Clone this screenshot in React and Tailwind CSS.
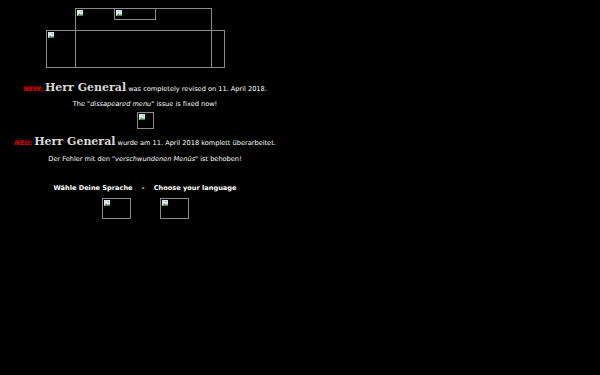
import React from "react";

function Broken({ className }) {
  return (
    <div className={"border border-[#8a8a8a] " + className}>
      <svg width="7" height="7" viewBox="0 0 7 7" className="block ml-[1px] mt-[1px]">
        <rect x="0" y="0" width="6" height="6" fill="#dfe6ea" />
        <path d="M0 6 L2.5 3.5 L4 5 L5 4 L6 5 L6 6 Z" fill="#3f8f3f" />
        <rect x="3.5" y="0.8" width="1.5" height="1.5" fill="#9fb7d0" />
      </svg>
    </div>
  );
}

export default function App() {
  return (
    <div className="w-[600px] h-[375px] bg-black overflow-hidden" style={{ fontFamily: '"DejaVu Sans", Verdana, sans-serif' }}>
      <div className="relative h-[70px] w-[290px]">
        <Broken className="absolute left-[46px] top-[30px] w-[179px] h-[38px]" />
        <Broken className="absolute left-[75px] top-[8px] w-[137px] h-[60px]" />
        <Broken className="absolute left-[114px] top-[8px] w-[42px] h-[12px]" />
      </div>
      <div className="w-[290px] flex flex-col items-center text-white text-[6.6px]">
        <div className="mt-[10px] flex items-baseline gap-[2px] whitespace-nowrap">
          <span className="text-[#e00000] font-bold italic text-[6.6px]">NEW:</span>
          <span className="text-[#d8d8d8] font-bold text-[11px]" style={{ fontFamily: '"DejaVu Serif", Georgia, serif' }}>Herr General</span>
          <span>was completely revised on 11. April 2018.</span>
        </div>
        <div className="mt-[3px] whitespace-nowrap">The "<i>dissapeared menu</i>" issue is fixed now!</div>
        <Broken className="mt-[3px] w-[17px] h-[17px]" />
        <div className="mt-[5px] flex items-baseline gap-[2px] whitespace-nowrap">
          <span className="text-[#e00000] font-bold italic text-[6.6px]">NEU:</span>
          <span className="text-[#d8d8d8] font-bold text-[11px]" style={{ fontFamily: '"DejaVu Serif", Georgia, serif' }}>Herr General</span>
          <span>wurde am 11. April 2018 komplett überarbeitet.</span>
        </div>
        <div className="mt-[4px] whitespace-nowrap">Der Fehler mit den "<i>verschwundenen Menüs</i>" ist behoben!</div>
        <div className="mt-[19px] font-bold whitespace-nowrap">Wähle Deine Sprache&nbsp;&nbsp;&nbsp;&nbsp;-&nbsp;&nbsp;&nbsp;&nbsp;Choose your language</div>
        <div className="mt-[4px] flex gap-[29px]">
          <Broken className="w-[29px] h-[21px]" />
          <Broken className="w-[29px] h-[21px]" />
        </div>
      </div>
    </div>
  );
}
